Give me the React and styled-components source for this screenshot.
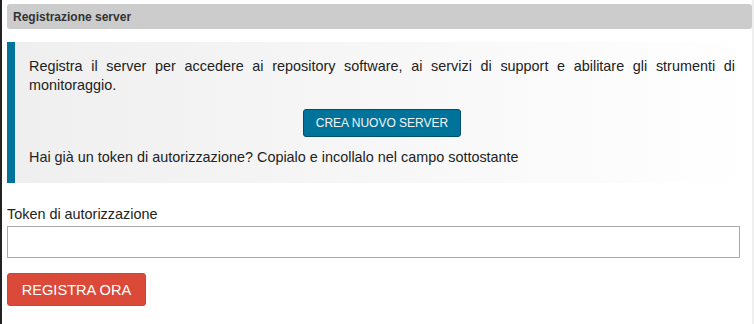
import React from "react";
import styled, { createGlobalStyle } from "styled-components";

const GlobalStyle = createGlobalStyle`
  html, body {
    margin: 0;
    padding: 0;
    background: #fff;
  }
  body {
    font-family: "Liberation Sans", Arial, sans-serif;
    color: #222;
  }
`;

function App() {
  return (
    <>
      <GlobalStyle />
      <Page>
        <Panel>
          <PanelHeader>Registrazione server</PanelHeader>
          <Notice>
            <NoticeText>
              Registra il server per accedere ai repository software, ai servizi
              di support e abilitare gli strumenti di monitoraggio.
            </NoticeText>
            <NoticeActions>
              <PrimaryButton type="button">CREA NUOVO SERVER</PrimaryButton>
            </NoticeActions>
            <NoticeText>
              Hai già un token di autorizzazione? Copialo e incollalo nel campo
              sottostante
            </NoticeText>
          </Notice>
          <Field>
            <Label htmlFor="token">Token di autorizzazione</Label>
            <Input id="token" type="text" />
          </Field>
          <DangerButton type="button">REGISTRA ORA</DangerButton>
        </Panel>
      </Page>
    </>
  );
}

export default App;

const Page = styled.div`
  width: 754px;
  height: 324px;
  box-sizing: border-box;
  border-left: 2px solid #222;
  border-right: 2px solid #efefef;
  overflow: hidden;
`;

const Panel = styled.div`
  display: flex;
  flex-direction: column;
  align-items: flex-start;
  padding: 4px 0 0 5px;
`;

const PanelHeader = styled.div`
  align-self: stretch;
  height: 25px;
  box-sizing: border-box;
  padding: 0 6px;
  display: flex;
  align-items: center;
  background: #cccccc;
  border-radius: 3px;
  font-size: 12px;
  font-weight: bold;
  color: #333;
`;

const Notice = styled.div`
  align-self: stretch;
  margin: 13px -2px 0 0;
  box-sizing: border-box;
  height: 141px;
  padding: 15px 19px 0 14px;
  border-left: 8px solid #00739b;
  background: linear-gradient(to right, #efefef, #ffffff);
`;

const NoticeText = styled.p`
  margin: 0;
  font-size: 14.4px;
  line-height: 19px;
  text-align: justify;
  color: #222;
`;

const NoticeActions = styled.div`
  display: flex;
  justify-content: center;
  margin: 14px 0 11px;
`;

const PrimaryButton = styled.button`
  height: 28px;
  width: 158px;
  padding: 0;
  background: #00739b;
  border: 1px solid #00506c;
  border-radius: 3px;
  color: #f4f4f4;
  font-family: "Liberation Sans", Arial, sans-serif;
  font-size: 12px;
  cursor: pointer;
`;

const Field = styled.div`
  align-self: stretch;
  display: flex;
  flex-direction: column;
  margin-top: 22px;
`;

const Label = styled.label`
  font-size: 14.4px;
  line-height: 18px;
  color: #222;
  margin-bottom: 3px;
`;

const Input = styled.input`
  width: 733px;
  height: 32px;
  box-sizing: border-box;
  border: 1px solid #aaaaaa;
  border-radius: 0;
  padding: 0 8px;
  font-family: "Liberation Sans", Arial, sans-serif;
  font-size: 14px;
  outline: none;
`;

const DangerButton = styled.button`
  margin-top: 15px;
  width: 139px;
  height: 33px;
  padding: 0;
  background: #db4a38;
  border: 1px solid #d04433;
  border-radius: 3px;
  color: #fff;
  font-family: "Liberation Sans", Arial, sans-serif;
  font-size: 14.6px;
  cursor: pointer;
`;
